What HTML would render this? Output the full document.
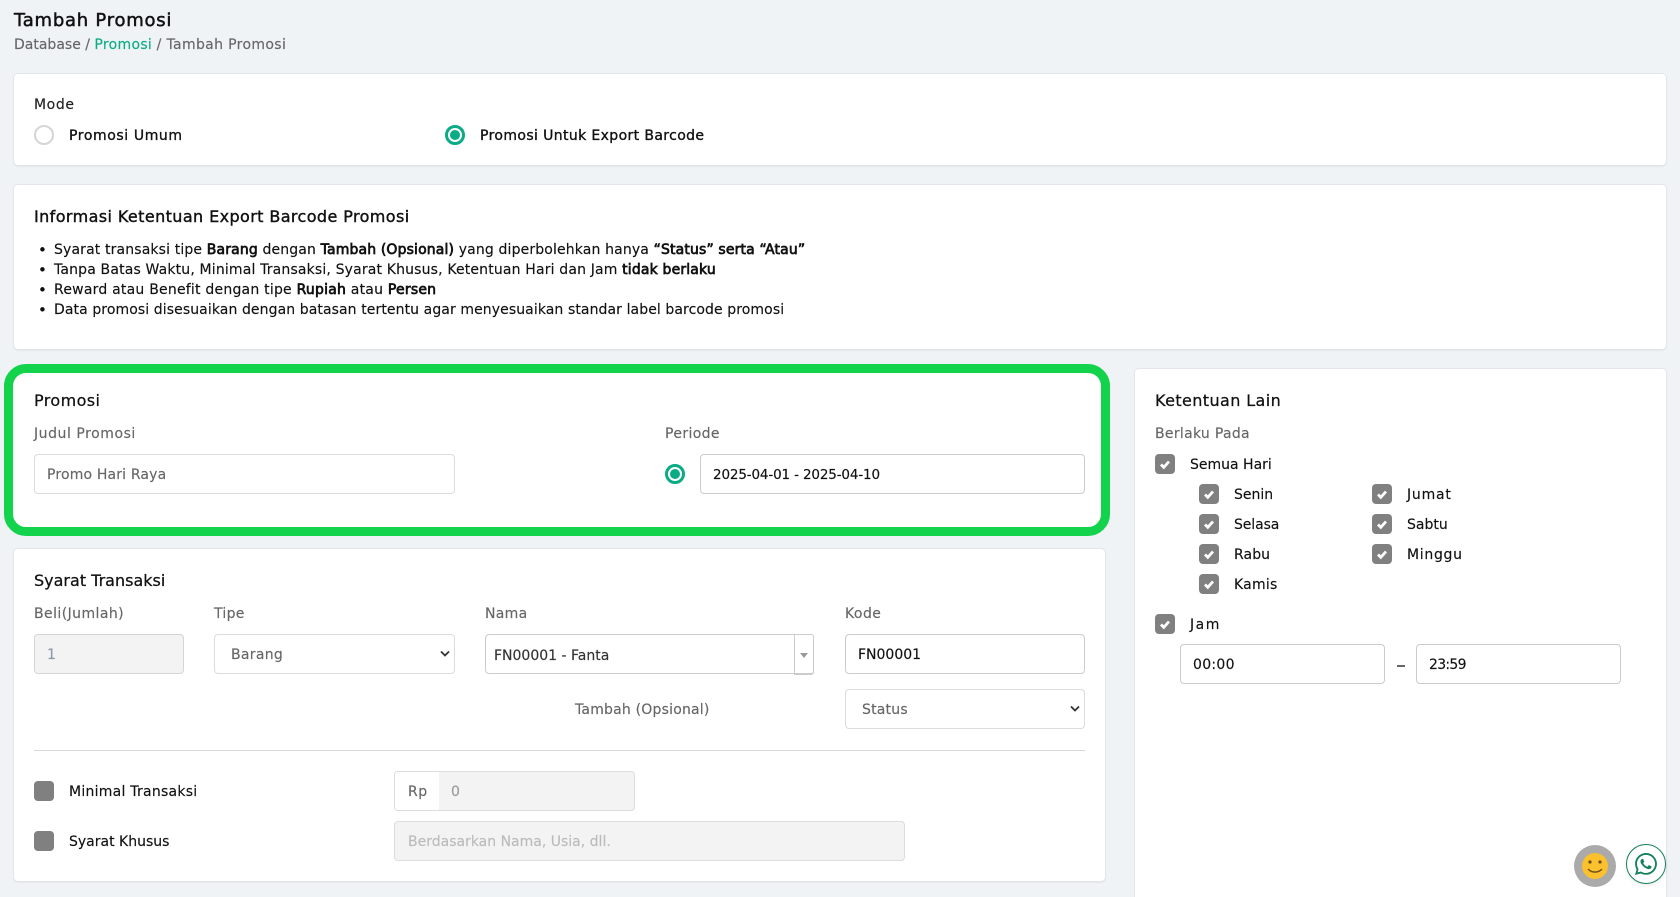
<!DOCTYPE html>
<html lang="id"><head><meta charset="utf-8"><title>Tambah Promosi</title>
<style>
*{box-sizing:border-box}
html,body{margin:0;padding:0;width:1680px;height:897px;overflow:hidden;background:#eff3f6}
body{position:relative;font-family:"DejaVu Sans","Liberation Sans",sans-serif;font-size:14px;color:#111}
.c{position:absolute;background:#fff;border:1px solid #e2e6ea;border-radius:5px;box-shadow:0 1px 1px rgba(0,0,0,.05)}
.t{position:absolute;white-space:nowrap;line-height:20px;height:20px;margin-top:1px;-webkit-text-stroke:.15px}
.t b{font-weight:400;-webkit-text-stroke:.7px}
.h{font-size:16px;color:#111;-webkit-text-stroke:.25px}
.m{-webkit-text-stroke:.35px}
.l{color:#666}
.u{font-size:15px}
.i{position:absolute;background:#fff;border:1px solid #dcdcdc;border-radius:4px}
.d{background:#f3f3f3}
.cb{position:absolute;width:20px;height:20px;background:#808080;border-radius:4px}
.cb svg{position:absolute;left:4px;top:4px;width:12px;height:12px}
.r{position:absolute;width:20px;height:20px;border-radius:50%;border:2px solid #d5d5d5;background:#fff}
.r.on{border:3px solid #0aab85}
.r.on:after{content:"";position:absolute;left:2px;top:2px;width:10px;height:10px;border-radius:50%;background:#0aab85}
.ch{position:absolute;width:10px;height:7px}
</style></head><body>

<div class="t" style="left:14px;top:10px;font-size:18px;letter-spacing:.75px;color:#111;-webkit-text-stroke:.5px">Tambah Promosi</div>
<div class="t" style="left:14px;top:34px;color:#666">Database / <span style="color:#0cad85;letter-spacing:.3px">Promosi</span> <span style="letter-spacing:.35px">/ Tambah Promosi</span></div>

<!-- Mode -->
<div class="c" style="left:13px;top:73px;width:1654px;height:93px"></div>
<div class="t" style="left:34px;top:94px;color:#222;letter-spacing:.6px">Mode</div>
<div class="r" style="left:34px;top:125px"></div>
<div class="t m" style="left:69px;top:125px;letter-spacing:.6px">Promosi Umum</div>
<div class="r on" style="left:445px;top:125px"></div>
<div class="t m" style="left:480px;top:125px;letter-spacing:.38px">Promosi Untuk Export Barcode</div>

<!-- Info -->
<div class="c" style="left:13px;top:184px;width:1654px;height:166px"></div>
<div class="t h" style="left:34px;top:206px;letter-spacing:.4px;-webkit-text-stroke:.4px">Informasi Ketentuan Export Barcode Promosi</div>
<div class="t u" style="left:38px;top:239px">•</div>
<div class="t" style="left:54px;top:239px;letter-spacing:.14px">Syarat transaksi tipe <b>Barang</b> dengan <b>Tambah (Opsional)</b> yang diperbolehkan hanya <b>“Status” serta “Atau”</b></div>
<div class="t u" style="left:38px;top:259px">•</div>
<div class="t" style="left:54px;top:259px;letter-spacing:.16px">Tanpa Batas Waktu, Minimal Transaksi, Syarat Khusus, Ketentuan Hari dan Jam <b>tidak berlaku</b></div>
<div class="t u" style="left:38px;top:279px">•</div>
<div class="t" style="left:54px;top:279px;letter-spacing:.22px">Reward atau Benefit dengan tipe <b>Rupiah</b> atau <b>Persen</b></div>
<div class="t u" style="left:38px;top:299px">•</div>
<div class="t" style="left:54px;top:299px;letter-spacing:.09px">Data promosi disesuaikan dengan batasan tertentu agar menyesuaikan standar label barcode promosi</div>

<!-- Promosi highlighted -->
<div style="position:absolute;left:4px;top:364px;width:1106px;height:172px;background:#fff;border:9px solid #12d34b;border-radius:22px"></div>
<div class="t h" style="left:34px;top:390px;letter-spacing:.4px">Promosi</div>
<div class="t l" style="left:34px;top:423px;letter-spacing:.55px">Judul Promosi</div>
<div class="i" style="left:34px;top:454px;width:421px;height:40px"></div>
<div class="t l" style="left:47px;top:464px;letter-spacing:.16px">Promo Hari Raya</div>
<div class="t l" style="left:665px;top:423px;letter-spacing:.38px">Periode</div>
<div class="r on" style="left:665px;top:464px"></div>
<div class="i" style="left:700px;top:454px;width:385px;height:40px;border-color:#ccc"></div>
<div class="t" style="left:713px;top:464px;font-size:13.5px;letter-spacing:-.15px">2025-04-01 - 2025-04-10</div>

<!-- Syarat -->
<div class="c" style="left:13px;top:548px;width:1093px;height:334px"></div>
<div class="t h" style="left:34px;top:570px">Syarat Transaksi</div>
<div class="t l" style="left:34px;top:603px;letter-spacing:.43px">Beli(Jumlah)</div>
<div class="t l" style="left:214px;top:603px;letter-spacing:.3px">Tipe</div>
<div class="t l" style="left:485px;top:603px;letter-spacing:.3px">Nama</div>
<div class="t l" style="left:845px;top:603px;letter-spacing:.45px">Kode</div>
<div class="i d" style="left:34px;top:634px;width:150px;height:40px;border-color:#d5d5d5"></div>
<div class="t" style="left:47px;top:644px;color:#8a98a8">1</div>
<div class="i" style="left:214px;top:634px;width:241px;height:40px"></div>
<div class="t l" style="left:231px;top:644px;letter-spacing:.3px">Barang</div>
<svg class="ch" style="left:440px;top:650px" viewBox="0 0 10 7"><path d="M1 1.5l4 4 4-4" fill="none" stroke="#333" stroke-width="1.8"/></svg>
<div class="i" style="left:485px;top:634px;width:329px;height:40px;border-color:#ccc"></div>
<div style="position:absolute;left:794px;top:634px;width:20px;height:41px;border:1px solid #ccc;border-bottom-width:2px;border-radius:0 3px 3px 0;background:#fff"></div>
<div style="position:absolute;left:800px;top:653px;width:0;height:0;border-left:4px solid transparent;border-right:4px solid transparent;border-top:5px solid #999"></div>
<div class="t" style="left:494px;top:645px;color:#333">FN00001 - Fanta</div>
<div class="i" style="left:845px;top:634px;width:240px;height:40px;border-color:#ccc"></div>
<div class="t" style="left:858px;top:644px">FN00001</div>
<div class="t l" style="left:575px;top:699px;letter-spacing:.2px">Tambah (Opsional)</div>
<div class="i" style="left:845px;top:689px;width:240px;height:40px"></div>
<div class="t l" style="left:862px;top:699px;letter-spacing:.2px">Status</div>
<svg class="ch" style="left:1070px;top:705px" viewBox="0 0 10 7"><path d="M1 1.5l4 4 4-4" fill="none" stroke="#333" stroke-width="1.8"/></svg>
<div style="position:absolute;left:34px;top:750px;width:1051px;height:1px;background:#d9d9d9"></div>

<div class="cb" style="left:34px;top:781px"></div>
<div class="t" style="left:69px;top:781px;letter-spacing:.25px">Minimal Transaksi</div>
<div class="i d" style="left:394px;top:771px;width:241px;height:40px"></div>
<div style="position:absolute;left:395px;top:772px;width:44px;height:38px;background:#fff;border-radius:3px 0 0 3px"></div>
<div class="t l" style="left:408px;top:781px;letter-spacing:.5px">Rp</div>
<div class="t" style="left:451px;top:781px;color:#999">0</div>
<div class="cb" style="left:34px;top:831px"></div>
<div class="t" style="left:69px;top:831px">Syarat Khusus</div>
<div class="i d" style="left:394px;top:821px;width:511px;height:40px"></div>
<div class="t" style="left:408px;top:831px;color:#bbb">Berdasarkan Nama, Usia, dll.</div>

<!-- Ketentuan -->
<div class="c" style="left:1134px;top:368px;width:533px;height:560px"></div>
<div class="t h" style="left:1155px;top:390px;letter-spacing:.4px">Ketentuan Lain</div>
<div class="t l" style="left:1155px;top:423px;letter-spacing:.3px">Berlaku Pada</div>

<div class="cb" style="left:1155px;top:454px"><svg viewBox="0 0 12 12"><path d="M2 6.5l2.8 2.8L10 3.5" fill="none" stroke="#fff" stroke-width="2.8"/></svg></div>
<div class="t" style="left:1190px;top:454px">Semua Hari</div>

<div class="cb" style="left:1199px;top:484px"><svg viewBox="0 0 12 12"><path d="M2 6.5l2.8 2.8L10 3.5" fill="none" stroke="#fff" stroke-width="2.8"/></svg></div>
<div class="t" style="left:1234px;top:484px">Senin</div>
<div class="cb" style="left:1199px;top:514px"><svg viewBox="0 0 12 12"><path d="M2 6.5l2.8 2.8L10 3.5" fill="none" stroke="#fff" stroke-width="2.8"/></svg></div>
<div class="t" style="left:1234px;top:514px;letter-spacing:-.1px">Selasa</div>
<div class="cb" style="left:1199px;top:544px"><svg viewBox="0 0 12 12"><path d="M2 6.5l2.8 2.8L10 3.5" fill="none" stroke="#fff" stroke-width="2.8"/></svg></div>
<div class="t" style="left:1234px;top:544px;letter-spacing:.1px">Rabu</div>
<div class="cb" style="left:1199px;top:574px"><svg viewBox="0 0 12 12"><path d="M2 6.5l2.8 2.8L10 3.5" fill="none" stroke="#fff" stroke-width="2.8"/></svg></div>
<div class="t" style="left:1234px;top:574px;letter-spacing:.25px">Kamis</div>

<div class="cb" style="left:1372px;top:484px"><svg viewBox="0 0 12 12"><path d="M2 6.5l2.8 2.8L10 3.5" fill="none" stroke="#fff" stroke-width="2.8"/></svg></div>
<div class="t" style="left:1407px;top:484px;letter-spacing:.8px">Jumat</div>
<div class="cb" style="left:1372px;top:514px"><svg viewBox="0 0 12 12"><path d="M2 6.5l2.8 2.8L10 3.5" fill="none" stroke="#fff" stroke-width="2.8"/></svg></div>
<div class="t" style="left:1407px;top:514px">Sabtu</div>
<div class="cb" style="left:1372px;top:544px"><svg viewBox="0 0 12 12"><path d="M2 6.5l2.8 2.8L10 3.5" fill="none" stroke="#fff" stroke-width="2.8"/></svg></div>
<div class="t" style="left:1407px;top:544px;letter-spacing:.7px">Minggu</div>

<div class="cb" style="left:1155px;top:614px"><svg viewBox="0 0 12 12"><path d="M2 6.5l2.8 2.8L10 3.5" fill="none" stroke="#fff" stroke-width="2.8"/></svg></div>
<div class="t" style="left:1190px;top:614px;letter-spacing:1.5px">Jam</div>

<div class="i" style="left:1180px;top:644px;width:205px;height:40px;border-color:#ccc"></div>
<div class="t" style="left:1193px;top:654px;letter-spacing:.3px">00:00</div>
<div style="position:absolute;left:1397px;top:665px;width:8px;height:2px;background:#666"></div>
<div class="i" style="left:1416px;top:644px;width:205px;height:40px;border-color:#ccc"></div>
<div class="t" style="left:1429px;top:654px;letter-spacing:-.7px">23:59</div>

<!-- Floating -->
<svg style="position:absolute;left:1574px;top:845px;width:42px;height:42px" viewBox="0 0 42 42">
<circle cx="21" cy="21" r="21" fill="#aaa"/><circle cx="21" cy="21" r="13" fill="#fbc02d"/>
<circle cx="16" cy="17" r="1.6" fill="#6b4e16"/><circle cx="26" cy="17" r="1.6" fill="#6b4e16"/>
<path d="M14.5 24.5c3.5 3.4 9.5 3.4 13 0" fill="none" stroke="#6b4e16" stroke-width="1.5" stroke-linecap="round"/></svg>
<div style="position:absolute;left:1626px;top:844px;width:40px;height:40px;border-radius:50%;background:#fff;border:1px solid #14805e;box-shadow:0 1px 4px rgba(0,0,0,.1)"></div>
<svg style="position:absolute;left:1635px;top:853px;width:22px;height:22px" viewBox="0 0 16 16"><path fill="#14805e" d="M13.601 2.326A7.854 7.854 0 0 0 7.994 0C3.627 0 .068 3.558.064 7.926c0 1.399.366 2.76 1.057 3.965L0 16l4.204-1.102a7.933 7.933 0 0 0 3.79.965h.004c4.368 0 7.926-3.558 7.93-7.93A7.898 7.898 0 0 0 13.6 2.326zM7.994 14.521a6.573 6.573 0 0 1-3.356-.92l-.24-.144-2.494.654.666-2.433-.156-.251a6.56 6.56 0 0 1-1.007-3.505c0-3.626 2.957-6.584 6.591-6.584a6.56 6.56 0 0 1 4.66 1.931 6.557 6.557 0 0 1 1.928 4.66c-.004 3.639-2.961 6.592-6.592 6.592zm3.615-4.934c-.197-.099-1.17-.578-1.353-.646-.182-.065-.315-.099-.445.099-.133.197-.513.646-.627.775-.114.133-.232.148-.43.05-.197-.1-.836-.308-1.592-.985-.59-.525-.985-1.175-1.103-1.372-.114-.198-.011-.304.088-.403.087-.088.197-.232.296-.346.1-.114.133-.198.198-.33.065-.134.034-.248-.015-.347-.05-.099-.445-1.076-.612-1.47-.16-.389-.323-.335-.445-.34-.114-.007-.247-.007-.38-.007a.729.729 0 0 0-.529.247c-.182.198-.691.677-.691 1.654 0 .977.71 1.916.81 2.049.098.133 1.394 2.132 3.383 2.992.47.205.84.326 1.129.418.475.152.904.129 1.246.08.38-.058 1.171-.48 1.338-.943.164-.464.164-.86.114-.943-.049-.084-.182-.133-.38-.232z"/></svg>
</body></html>
